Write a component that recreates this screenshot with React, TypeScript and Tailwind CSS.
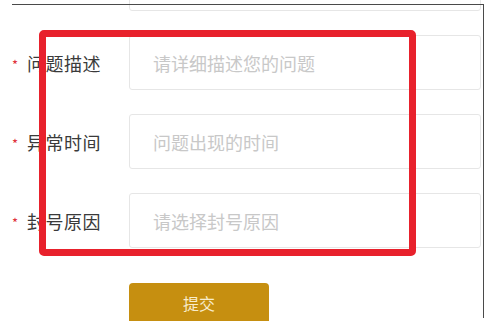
import React from 'react';

const rows = [
  { label: '问题描述', placeholder: '请详细描述您的问题' },
  { label: '异常时间', placeholder: '问题出现的时间' },
  { label: '封号原因', placeholder: '请选择封号原因' },
];

function FieldRow({ label, placeholder }: { label?: string; placeholder?: string }) {
  return (
    <div className="flex items-center h-[55px]">
      <div className="w-[129px] flex items-center pl-[12px]">
        {label && (
          <>
            <span className="text-[13px] text-[#e0303a] mr-[9px] leading-none mt-[3px]">*</span>
            <span className="text-[18px] text-[#3a3a3a] leading-none tracking-[0.5px]">{label}</span>
          </>
        )}
      </div>
      <input
        readOnly
        placeholder={placeholder}
        className="flex-1 h-full border border-[#e6e6e6] rounded-[3px] bg-white pl-[23px] text-[18px] outline-none placeholder:text-[#c8c8c8]"
      />
    </div>
  );
}

export default function App() {
  return (
    <div
      className="relative w-[500px] h-[327px] bg-white overflow-hidden"
      style={{ fontFamily: '"Noto Sans CJK SC", "Noto Sans", sans-serif' }}
    >
      <div className="h-[321px] overflow-hidden pr-[19px]">
        <div className="-mt-[44px] flex flex-col gap-[24px]">
          <FieldRow />
          {rows.map((r) => (
            <FieldRow key={r.label} label={r.label} placeholder={r.placeholder} />
          ))}
        </div>
        <div className="pl-[129px] mt-[35px]">
          <button className="w-[140px] h-[44px] rounded-[4px] bg-[#c68f10] text-[16px] text-[#f8eccb] pb-[4px]">
            提交
          </button>
        </div>
      </div>

      {/* screenshot frame */}
      <div className="absolute left-[12px] top-[4px] w-[472px] h-[314px] border-t-[1.5px] border-r-[1.5px] border-[#4a4a4a] pointer-events-none" />

      {/* annotation box */}
      <div className="absolute left-[39px] top-[30px] w-[377px] h-[226px] border-[7px] border-[#e8212c] rounded-[5px] pointer-events-none" />
    </div>
  );
}
